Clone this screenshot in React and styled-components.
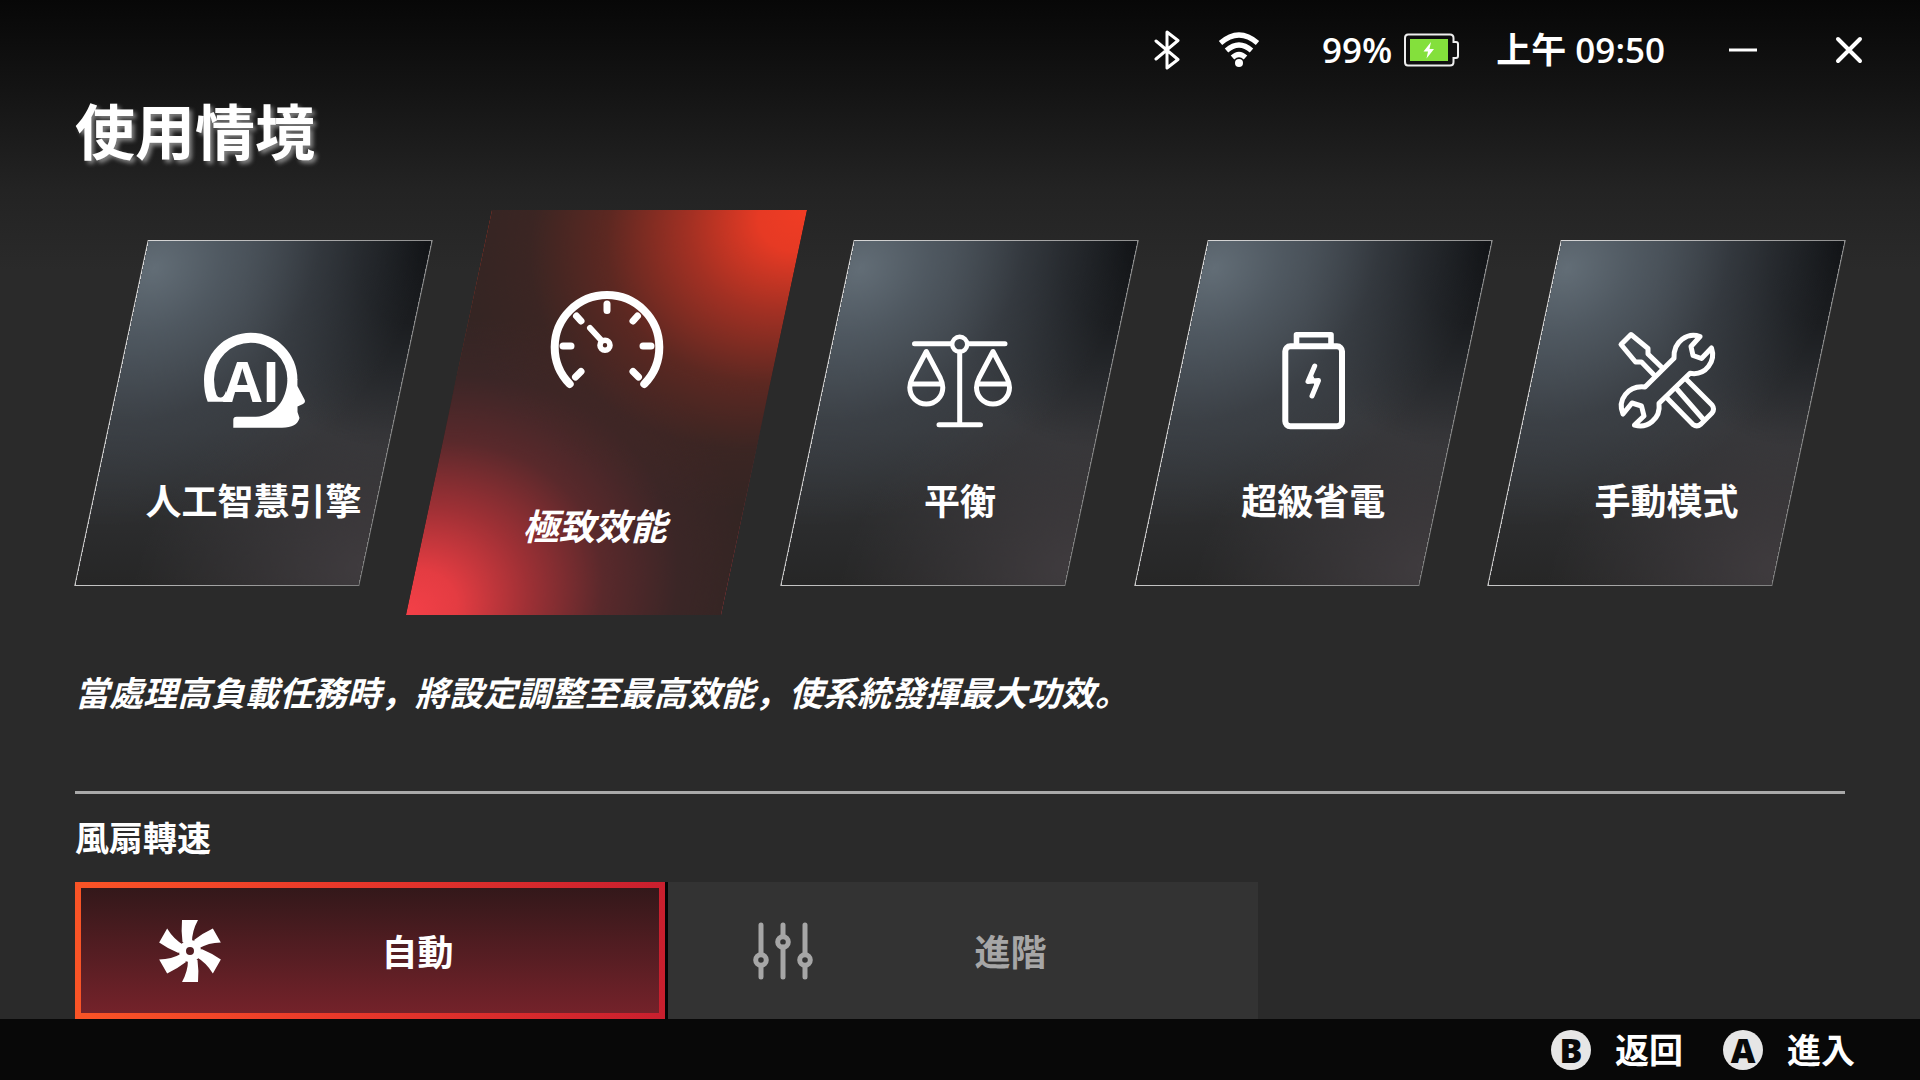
import React, { useState } from "react";
import styled, { createGlobalStyle, css } from "styled-components";

const GlobalStyle = createGlobalStyle`
  * {
    box-sizing: border-box;
  }

  body {
    margin: 0;
    background: #2a2a2a;
    color: #fff;
    font-family: "Open Sans", "Noto Sans CJK JP", sans-serif;
  }

  button {
    border: 0;
    padding: 0;
    background: none;
    color: inherit;
    font: inherit;
    cursor: pointer;
  }
`;

const Page = styled.div`
  display: flex;
  flex-direction: column;
  min-height: 100vh;
  background: linear-gradient(#070707, #141414 90px, #232323 190px, #2a2a2a 270px);
`;

const StatusBar = styled.header`
  display: flex;
  align-items: center;
  justify-content: flex-end;
  gap: 36px;
  padding: 20px 41px 16px;
  font-size: 35px;
  font-weight: 600;
  line-height: 60px;
`;

const Power = styled.div`
  display: flex;
  align-items: center;
  gap: 12px;
  margin-left: 26px;
`;

const WindowControls = styled.div`
  display: flex;
  gap: 46px;
  margin-left: 12px;
`;

const WindowButton = styled.button`
  display: grid;
  place-items: center;
  width: 60px;
  height: 60px;
`;

const Content = styled.main`
  flex: 1;
  padding: 0 75px;
`;

const Title = styled.h1`
  margin: 0 0 42px;
  font-size: 60px;
  font-weight: 700;
  line-height: 72px;
  text-shadow: 3px 3px 4px rgba(255, 255, 255, 0.45);
`;

const Scenarios = styled.div`
  display: grid;
  grid-template-columns: repeat(5, 1fr);
  align-items: center;
  gap: 68px;
  padding: 0 36px;
`;

const activeCard = css`
  height: 405px;
  margin: 0 -15px;
  padding-top: 76px;
  gap: 97px;

  &::before {
    border: 0;
    background: radial-gradient(
        ellipse 108% 74% at 100% 0%,
        #f03c24 0%,
        #e63a24 14%,
        rgba(182, 50, 35, 0.85) 34%,
        rgba(125, 42, 32, 0.55) 58%,
        rgba(75, 38, 34, 0.3) 80%,
        rgba(52, 37, 35, 0) 100%
      ),
      radial-gradient(
        ellipse 106% 74% at 0% 100%,
        #f44048 0%,
        #e43c42 15%,
        rgba(176, 50, 56, 0.85) 36%,
        rgba(120, 44, 50, 0.55) 58%,
        rgba(75, 40, 46, 0.3) 80%,
        rgba(52, 37, 35, 0) 100%
      ),
      #342523;
  }
`;

const Card = styled.button`
  display: flex;
  flex-direction: column;
  align-items: center;
  gap: 43px;
  height: 346px;
  padding-top: 85px;
  position: relative;
  isolation: isolate;

  /* slanted plate behind the upright icon and label */
  &::before {
    content: "";
    position: absolute;
    inset: 0;
    z-index: -1;
    transform: skewX(-12deg);
    border: 1px solid transparent;
    background: radial-gradient(
          ellipse 95% 75% at 4% 8%,
          #626d76 0%,
          rgba(84, 94, 103, 0.85) 25%,
          rgba(66, 73, 81, 0.5) 60%,
          rgba(50, 54, 60, 0) 100%
        )
        padding-box,
      radial-gradient(ellipse 65% 60% at 100% 0%, #121417 0%, #1b1d20 40%, rgba(40, 42, 46, 0) 100%)
        padding-box,
      radial-gradient(ellipse 80% 60% at 100% 95%, #3f3b3e 0%, rgba(56, 54, 56, 0) 100%) padding-box,
      linear-gradient(#34383d, #343639 55%, #262626) padding-box,
      linear-gradient(100deg, #d8d8d8, #aaa 50%, #808080) border-box;
  }

  ${props => props.$active && activeCard}
`;

const CardLabel = styled.span`
  font-size: 36px;
  font-weight: 700;
  line-height: 48px;
  white-space: nowrap;
  ${props => props.$active && "font-style: italic; padding-right: 24px;"}
`;

const Description = styled.p`
  margin: 54px 0 74px;
  font-size: 34px;
  font-style: italic;
  font-weight: 700;
  line-height: 48px;
`;

const Divider = styled.hr`
  height: 3px;
  margin: 0 0 20px;
  border: 0;
  background: #a9a9a9;
`;

const SectionTitle = styled.h2`
  margin: 0 0 20px;
  font-size: 34px;
  font-weight: 700;
  line-height: 48px;
`;

const FanModes = styled.div`
  display: grid;
  grid-template-columns: 1fr 1fr;
  gap: 3px;
  width: 67%;
  max-width: 1183px;
  background: #050505;
`;

const FanMode = styled.button`
  display: flex;
  align-items: center;
  height: 137px;
  padding: 0 46px 0 77px;
  border: 6px solid #333;
  background: #333;
  color: #a6a6a6;
  font-size: 36px;
  font-weight: 700;

  ${props =>
    props.$active &&
    css`
      border-color: transparent;
      background: linear-gradient(#33181a, #74222a) padding-box,
        linear-gradient(90deg, #fa5426, #e8382a 45%, #c91f2e) border-box;
      color: #fff;
    `}
`;

const FanModeLabel = styled.span`
  flex: 1;
  text-align: center;
`;

const Footer = styled.footer`
  display: flex;
  align-items: center;
  justify-content: flex-end;
  gap: 40px;
  height: 61px;
  padding: 0 65px;
  background: #080808;
`;

const Hint = styled.button`
  display: flex;
  align-items: center;
  gap: 24px;
  font-size: 34px;
  font-weight: 700;
  line-height: 48px;
`;

const PadKey = styled.span`
  width: 40px;
  height: 40px;
  border-radius: 50%;
  background: #e6e6e6;
  color: #080808;
  font-size: 34px;
  font-weight: 800;
  line-height: 40px;
  text-align: center;
`;

const BluetoothIcon = () => (
  <svg width="28" height="40" fill="none" stroke="#fff" strokeWidth="3" role="img" aria-label="藍牙">
    <path d="M2 11 24 29.500 13 38V2l11 8.500L2 29" strokeLinejoin="round" strokeLinecap="round" />
  </svg>
);

const WifiIcon = () => (
  <svg width="42" height="36" fill="none" stroke="#fff" strokeWidth="5.200" role="img" aria-label="Wi-Fi">
    <path d="M2.500 11Q21-5 39.500 11M8.500 18.500Q21 7.500 33.500 18.500M14.500 25.500Q21 19.500 27.500 25.500" />
    <circle cx="21" cy="31" r="4" fill="#fff" stroke="none" />
  </svg>
);

const BatteryIcon = () => (
  <svg width="56" height="34" fill="none" role="img" aria-label="充電中">
    <path
      d="M4 1.500H46Q49.500 1.500 49.500 5V9H52Q54 9 54 11V23Q54 25 52 25H49.500V29Q49.500 32.500 46 32.500H4Q1 32.500 1 29V5Q1 1.500 4 1.500Z"
      stroke="#eee"
      strokeWidth="2"
    />
    <path d="M6 6H44V28H6Z" fill="#84e03c" />
    <path d="M27 9 19.500 18.500H24L22.500 25.500 30 16H25.500Z" fill="#fff" />
  </svg>
);

const AiIcon = () => (
  <svg width="110" height="110" fill="#fff" aria-hidden="true">
    <path d="M5 54.400A46.700 46.700 0 0 1 98.400 54.400H88.400A36.700 36.700 0 0 0 15 54.400Q15 63 17.500 70 19 73 22 72.500 25 72 27 66L31 76.700H8.700Q5 68 5 54.400Z" />
    <path d="M98.400 54V61L105.500 74.500Q107 77.500 104 79L98.500 81.500V87L100.500 93Q98 102.700 83 102.700H34.300V95Q34.300 91.700 37.600 91.700H57C75 91 88 76 88.400 54Z" />
    <text x="24" y="76.700" fontFamily="Open Sans" fontSize="56" fontWeight="700">
      AI
    </text>
  </svg>
);

const GaugeIcon = () => (
  <svg width="120" height="120" fill="none" stroke="#fff" strokeLinecap="round" aria-hidden="true">
    <path d="M22.700 98A52.300 52.300 0 1 1 97.300 98" strokeWidth="8" />
    <path
      d="M60 18V24.500M16 60H24M96 60H104M29.500 30 34 35M90.500 30 86 35M28.500 91 34 85.500M91.500 91 86 85.500"
      strokeWidth="7"
    />
    <path d="M43 42 54 54" strokeWidth="6" />
    <circle cx="58" cy="59.300" r="5" strokeWidth="5.600" />
  </svg>
);

const BalanceIcon = () => (
  <svg
    width="110"
    height="110"
    fill="none"
    stroke="#fff"
    strokeWidth="5"
    strokeLinecap="round"
    strokeLinejoin="round"
    aria-hidden="true"
  >
    <path d="M9.500 18.700H46M64 18.700H100M54.700 27V99.700M34 99.700H75.500" />
    <circle cx="54.700" cy="19.300" r="7.500" strokeWidth="4.400" />
    <path d="M21.300 26.500 7.300 53Q4.800 58 4.800 62.500A16.500 16.500 0 0 0 37.800 62.500Q37.800 58 35.300 53ZM6 59H37" />
    <path d="M88 26.500 74 53Q71.500 58 71.500 62.500A16.500 16.500 0 0 0 104.500 62.500Q104.500 58 102 53ZM72.500 59H103.500" />
  </svg>
);

const SaverIcon = () => (
  <svg width="110" height="110" fill="none" stroke="#fff" strokeLinejoin="round" aria-hidden="true">
    <rect x="27.300" y="21.300" width="56.700" height="80" rx="5" strokeWidth="6" />
    <path d="M38.500 21V9.800H73V21" strokeWidth="5.600" />
    <path d="M56.700 41 50 56.500 60.500 55.500 54 71" strokeWidth="5" strokeLinecap="round" />
    <path d="M54 49 50 56.500 56 57.500 58 64 60.500 55.500 56 54Z" fill="#fff" />
  </svg>
);

const ToolsIcon = () => (
  <svg
    width="110"
    height="110"
    fill="none"
    stroke="#fff"
    strokeWidth="5"
    strokeLinejoin="round"
    aria-hidden="true"
  >
    <path d="M34 62 63 33.300C62 16 77 7 89 11.500L80 21.500 82 30.500 90.500 33.500 100.500 23C105 36 95 51 79 48.300L48 78.300C50 94 36 104 23.500 100L33 91 30.500 81 21 78 12 89C6 75 17 60 34 62Z" />
    <path d="M44 51 30.500 37H24.500L10 19.500 20 9.500 37 23.500V29L51.500 43" />
    <path d="M74 53 101 80Q104 84 101 88L90 99Q86 102.500 82 99.500L56 73M65 63 92 94" />
  </svg>
);

const FanIcon = () => (
  <svg width="64" height="64" viewBox="-32 -32 64 64" fill="#fff" aria-hidden="true">
    {[0, 60, 120, 180, 240, 300].map(angle => (
      <path key={angle} d="M-8-31H8Q2-20 2-9H-7.500Q-9-20-8-31Z" transform={`rotate(${angle})`} />
    ))}
    <circle r="7.500" fill="none" stroke="#fff" strokeWidth="7" />
  </svg>
);

const SlidersIcon = () => (
  <svg
    width="64"
    height="64"
    viewBox="-32 -32 64 64"
    fill="none"
    stroke="currentColor"
    strokeWidth="5"
    strokeLinecap="round"
    aria-hidden="true"
  >
    <path d="M-22-26V3M-22 15V26M0-26V-15M0-4V26M22-26V3M22 15V26" />
    <circle cx="-22" cy="9" r="5.300" />
    <circle cx="0" cy="-9" r="5.300" />
    <circle cx="22" cy="9" r="5.300" />
  </svg>
);

const scenarios = [
  { id: "ai", label: "人工智慧引擎", Icon: AiIcon },
  { id: "extreme", label: "極致效能", Icon: GaugeIcon },
  { id: "balance", label: "平衡", Icon: BalanceIcon },
  { id: "saver", label: "超級省電", Icon: SaverIcon },
  { id: "manual", label: "手動模式", Icon: ToolsIcon }
];

const fanModes = [
  { id: "auto", label: "自動", Icon: FanIcon },
  { id: "advanced", label: "進階", Icon: SlidersIcon }
];

const App = () => {
  const [scenario, setScenario] = useState("extreme");
  const [fanMode, setFanMode] = useState("auto");

  return (
    <Page>
      <GlobalStyle />
      <StatusBar>
        <BluetoothIcon />
        <WifiIcon />
        <Power>
          <span>99%</span>
          <BatteryIcon />
        </Power>
        <time dateTime="09:50">上午 09:50</time>
        <WindowControls>
          <WindowButton aria-label="最小化">
            <svg width="30" height="30" stroke="#fff" strokeWidth="3">
              <path d="M1 15H29" />
            </svg>
          </WindowButton>
          <WindowButton aria-label="關閉">
            <svg width="28" height="28" stroke="#fff" strokeWidth="4">
              <path d="M3 3 25 25M25 3 3 25" strokeLinecap="round" />
            </svg>
          </WindowButton>
        </WindowControls>
      </StatusBar>

      <Content>
        <Title>使用情境</Title>
        <Scenarios>
          {scenarios.map(({ id, label, Icon }) => (
            <Card
              key={id}
              $active={id === scenario}
              aria-pressed={id === scenario}
              onClick={() => setScenario(id)}
            >
              <Icon />
              <CardLabel $active={id === scenario}>{label}</CardLabel>
            </Card>
          ))}
        </Scenarios>
        <Description>當處理高負載任務時，將設定調整至最高效能，使系統發揮最大功效。</Description>
        <Divider />
        <SectionTitle>風扇轉速</SectionTitle>
        <FanModes>
          {fanModes.map(({ id, label, Icon }) => (
            <FanMode
              key={id}
              $active={id === fanMode}
              aria-pressed={id === fanMode}
              onClick={() => setFanMode(id)}
            >
              <Icon />
              <FanModeLabel>{label}</FanModeLabel>
            </FanMode>
          ))}
        </FanModes>
      </Content>

      <Footer>
        <Hint>
          <PadKey>B</PadKey>
          返回
        </Hint>
        <Hint>
          <PadKey>A</PadKey>
          進入
        </Hint>
      </Footer>
    </Page>
  );
};

export default App;
